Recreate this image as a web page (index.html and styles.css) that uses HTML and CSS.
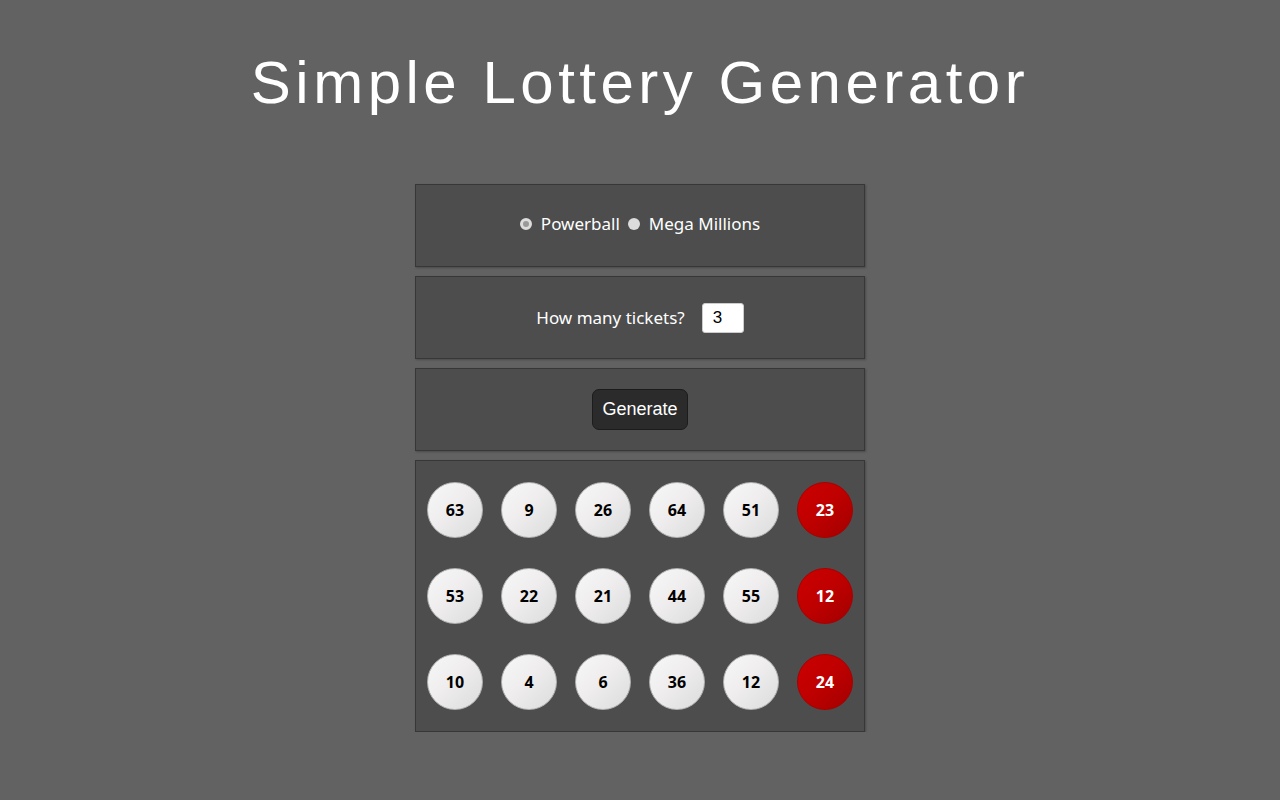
FILE: index.html
```html
<!DOCTYPE html>
<html>
<head>
<meta charset="utf-8">
<title>Simple Lottery Generator</title>
<link rel="stylesheet" href="styles.css">
</head>
<body>
<h1 class="title">Simple Lottery Generator</h1>
<main class="container">
  <section class="panel">
    <div class="options">
      <label class="option"><span class="radio checked"></span>Powerball</label>
      <label class="option"><span class="radio"></span>Mega Millions</label>
    </div>
  </section>
  <section class="panel">
    <span class="question">How many tickets?</span>
    <span class="count">3</span>
  </section>
  <section class="panel">
    <button class="generate">Generate</button>
  </section>
  <section class="results">
    <div class="ball">63</div><div class="ball">9</div><div class="ball">26</div><div class="ball">64</div><div class="ball">51</div><div class="ball red">23</div>
    <div class="ball">53</div><div class="ball">22</div><div class="ball">21</div><div class="ball">44</div><div class="ball">55</div><div class="ball red">12</div>
    <div class="ball">10</div><div class="ball">4</div><div class="ball">6</div><div class="ball">36</div><div class="ball">12</div><div class="ball red">24</div>
  </section>
</main>
</body>
</html>
```
FILE: styles.css
```css
html, body {
  margin: 0;
  padding: 0;
  background: #626262;
}
body {
  font-family: "Noto Sans", "Open Sans", sans-serif;
  color: #fff;
  padding-top: 48px;
}
.title {
  margin: 0;
  font-family: "Liberation Sans", Arial, sans-serif;
  font-weight: normal;
  font-size: 60px;
  line-height: 70px;
  letter-spacing: 4.5px;
  text-align: center;
  color: #fff;
}
.container {
  width: 450px;
  margin: 66px auto 0;
  display: flex;
  flex-direction: column;
  gap: 9px;
}
.panel {
  box-sizing: border-box;
  height: 83px;
  background: #4d4d4d;
  border: 1px solid #373737;
  box-shadow: 1px 1px 2px rgba(0,0,0,0.25);
  display: flex;
  align-items: center;
  justify-content: center;
}
.options {
  display: flex;
  align-items: center;
  padding-bottom: 4px;
}
.option {
  display: flex;
  align-items: center;
  font-size: 17px;
  margin: 0 4px;
}
.radio {
  width: 12px;
  height: 12px;
  border-radius: 50%;
  background: #dcdcdc;
  margin-right: 9px;
  box-sizing: border-box;
}
.radio.checked {
  background: #999;
  border: 3px solid #dcdcdc;
}
.question {
  font-size: 17px;
  margin-right: 17px;
}
.count {
  box-sizing: border-box;
  width: 42px;
  height: 30px;
  background: #fff;
  border: 1px solid #ccc;
  border-radius: 3px;
  color: #000;
  font-family: "Liberation Sans", Arial, sans-serif;
  font-size: 17px;
  line-height: 28px;
  padding-left: 10px;
}
.generate {
  box-sizing: border-box;
  width: 96px;
  height: 41px;
  background: #2b2b2b;
  border: 1px solid #1c1c1c;
  border-radius: 7px;
  color: #fff;
  font-family: "Liberation Sans", Arial, sans-serif;
  font-size: 18px;
  padding: 0;
}
.results {
  box-sizing: border-box;
  background: #4d4d4d;
  border: 1px solid #373737;
  box-shadow: 1px 1px 2px rgba(0,0,0,0.25);
  padding: 21px 11px;
  display: grid;
  grid-template-columns: repeat(6, 56px);
  column-gap: 18px;
  row-gap: 30px;
}
.ball {
  box-sizing: border-box;
  width: 56px;
  height: 56px;
  border-radius: 50%;
  background: linear-gradient(135deg, #f8f8f8 0%, #efeded 45%, #dcdcdc 100%);
  border: 1px solid #b0b0b0;
  color: #000;
  font-weight: bold;
  font-size: 16px;
  display: flex;
  align-items: center;
  justify-content: center;
}
.ball.red {
  background: linear-gradient(135deg, #cc0000 0%, #c00000 45%, #a30000 100%);
  border: 1px solid #a80000;
  color: #fff;
}
```
